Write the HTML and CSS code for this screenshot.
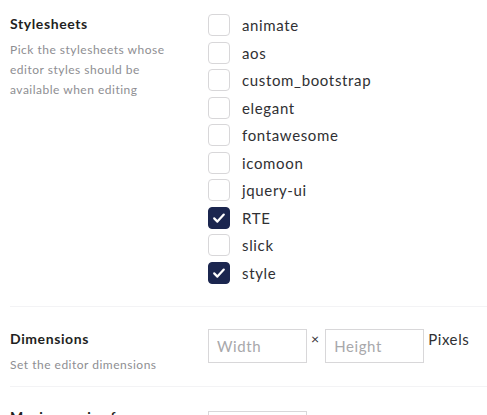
FILE: index.html
```html
<!DOCTYPE html>
<html>
<head>
<meta charset="utf-8">
<link rel="stylesheet" href="styles.css">
</head>
<body>
<div class="page">
  <div class="prop prop-first">
    <div class="label">
      <div class="title">Stylesheets</div>
      <div class="desc">Pick the stylesheets whose editor styles should be available when editing</div>
    </div>
    <ul class="checks">
      <li><span class="box"></span><span class="name">animate</span></li>
      <li><span class="box"></span><span class="name">aos</span></li>
      <li><span class="box"></span><span class="name">custom_bootstrap</span></li>
      <li><span class="box"></span><span class="name">elegant</span></li>
      <li><span class="box"></span><span class="name">fontawesome</span></li>
      <li><span class="box"></span><span class="name">icomoon</span></li>
      <li><span class="box"></span><span class="name">jquery-ui</span></li>
      <li><span class="box on"><svg viewBox="0 0 22 22" width="22" height="22"><path d="M6.2 11.4 L9.4 14.6 L15.8 7.6" fill="none" stroke="#fff" stroke-width="2.2" stroke-linecap="round" stroke-linejoin="round"/></svg></span><span class="name">RTE</span></li>
      <li><span class="box"></span><span class="name">slick</span></li>
      <li><span class="box on"><svg viewBox="0 0 22 22" width="22" height="22"><path d="M6.2 11.4 L9.4 14.6 L15.8 7.6" fill="none" stroke="#fff" stroke-width="2.2" stroke-linecap="round" stroke-linejoin="round"/></svg></span><span class="name">style</span></li>
    </ul>
  </div>
  <div class="prop prop-dim">
    <div class="label">
      <div class="title">Dimensions</div>
      <div class="desc">Set the editor dimensions</div>
    </div>
    <div class="inline">
      <input class="field" type="text" placeholder="Width">
      <span class="times">×</span>
      <input class="field" type="text" placeholder="Height">
      <span class="unit">Pixels</span>
    </div>
  </div>
  <div class="prop prop-max">
    <div class="label">
      <div class="title">Maximum size for inserted images</div>
      <div class="desc">Maximum width or height - enter 0 to disable resizing</div>
    </div>
    <div class="inline inline-max">
      <input class="field" type="text">
      <span class="unit">Pixels</span>
    </div>
  </div>
</div>
</body>
</html>
```

FILE: styles.css
```css
html, body {
  margin: 0;
  padding: 0;
  background: #ffffff;
  overflow: hidden;
}
body {
  font-family: Lato, "Open Sans", "Liberation Sans", sans-serif;
  color: #303033;
  width: 487px;
  height: 415px;
}
.page {
  padding-left: 10px;
}
.prop {
  display: grid;
  grid-template-columns: 175px 1fr;
  column-gap: 23px;
  border-bottom: 1px solid #f3f3f5;
}
.prop-first {
  padding-top: 14px;
  padding-bottom: 20px;
}
.prop-dim {
  padding-top: 22px;
  padding-bottom: 11px;
}
.prop-max {
  padding-top: 20px;
  border-bottom: none;
}
.title {
  font-size: 14px;
  font-weight: 700;
  letter-spacing: 0.6px;
  line-height: 20px;
  color: #1f1f22;
  margin-bottom: 6px;
}
.desc {
  font-size: 12px;
  letter-spacing: 0.5px;
  line-height: 20px;
  color: #8e8e92;
}
.checks {
  list-style: none;
  margin: -2.75px 0 0 0;
  padding: 0;
}
.checks li {
  display: flex;
  align-items: center;
  height: 27.5px;
}
.box {
  box-sizing: border-box;
  width: 22px;
  height: 22px;
  border: 1px solid #d8d7d9;
  border-radius: 4px;
  background: #fff;
  margin-right: 12px;
  flex: none;
  position: relative;
}
.box.on {
  background: #1b264f;
  border-color: #1b264f;
}
.box svg {
  position: absolute;
  left: -1px;
  top: -1px;
}
.name {
  font-size: 15px;
  letter-spacing: 0.65px;
  line-height: 20px;
  color: #303033;
}
.inline {
  display: flex;
  align-items: flex-start;
}
.field {
  box-sizing: border-box;
  width: 99px;
  height: 34px;
  border: 1px solid #d8d7d9;
  border-radius: 0;
  padding: 0 8px;
  margin: 0;
  font-family: Lato, "Open Sans", "Liberation Sans", sans-serif;
  font-size: 15px;
  letter-spacing: 0.6px;
  color: #303033;
  background: #fff;
  outline: none;
}
.field::placeholder {
  color: #a8a8ab;
}
.times {
  font-size: 14px;
  line-height: 20px;
  margin: 0 6px 0 4px;
  color: #303033;
}
.unit {
  font-size: 15px;
  letter-spacing: 0.6px;
  line-height: 20px;
  margin-left: 4px;
  color: #303033;
}
.inline-max {
  margin-top: 4px;
}
.inline-max .unit {
  margin-left: 5px;
}
```
